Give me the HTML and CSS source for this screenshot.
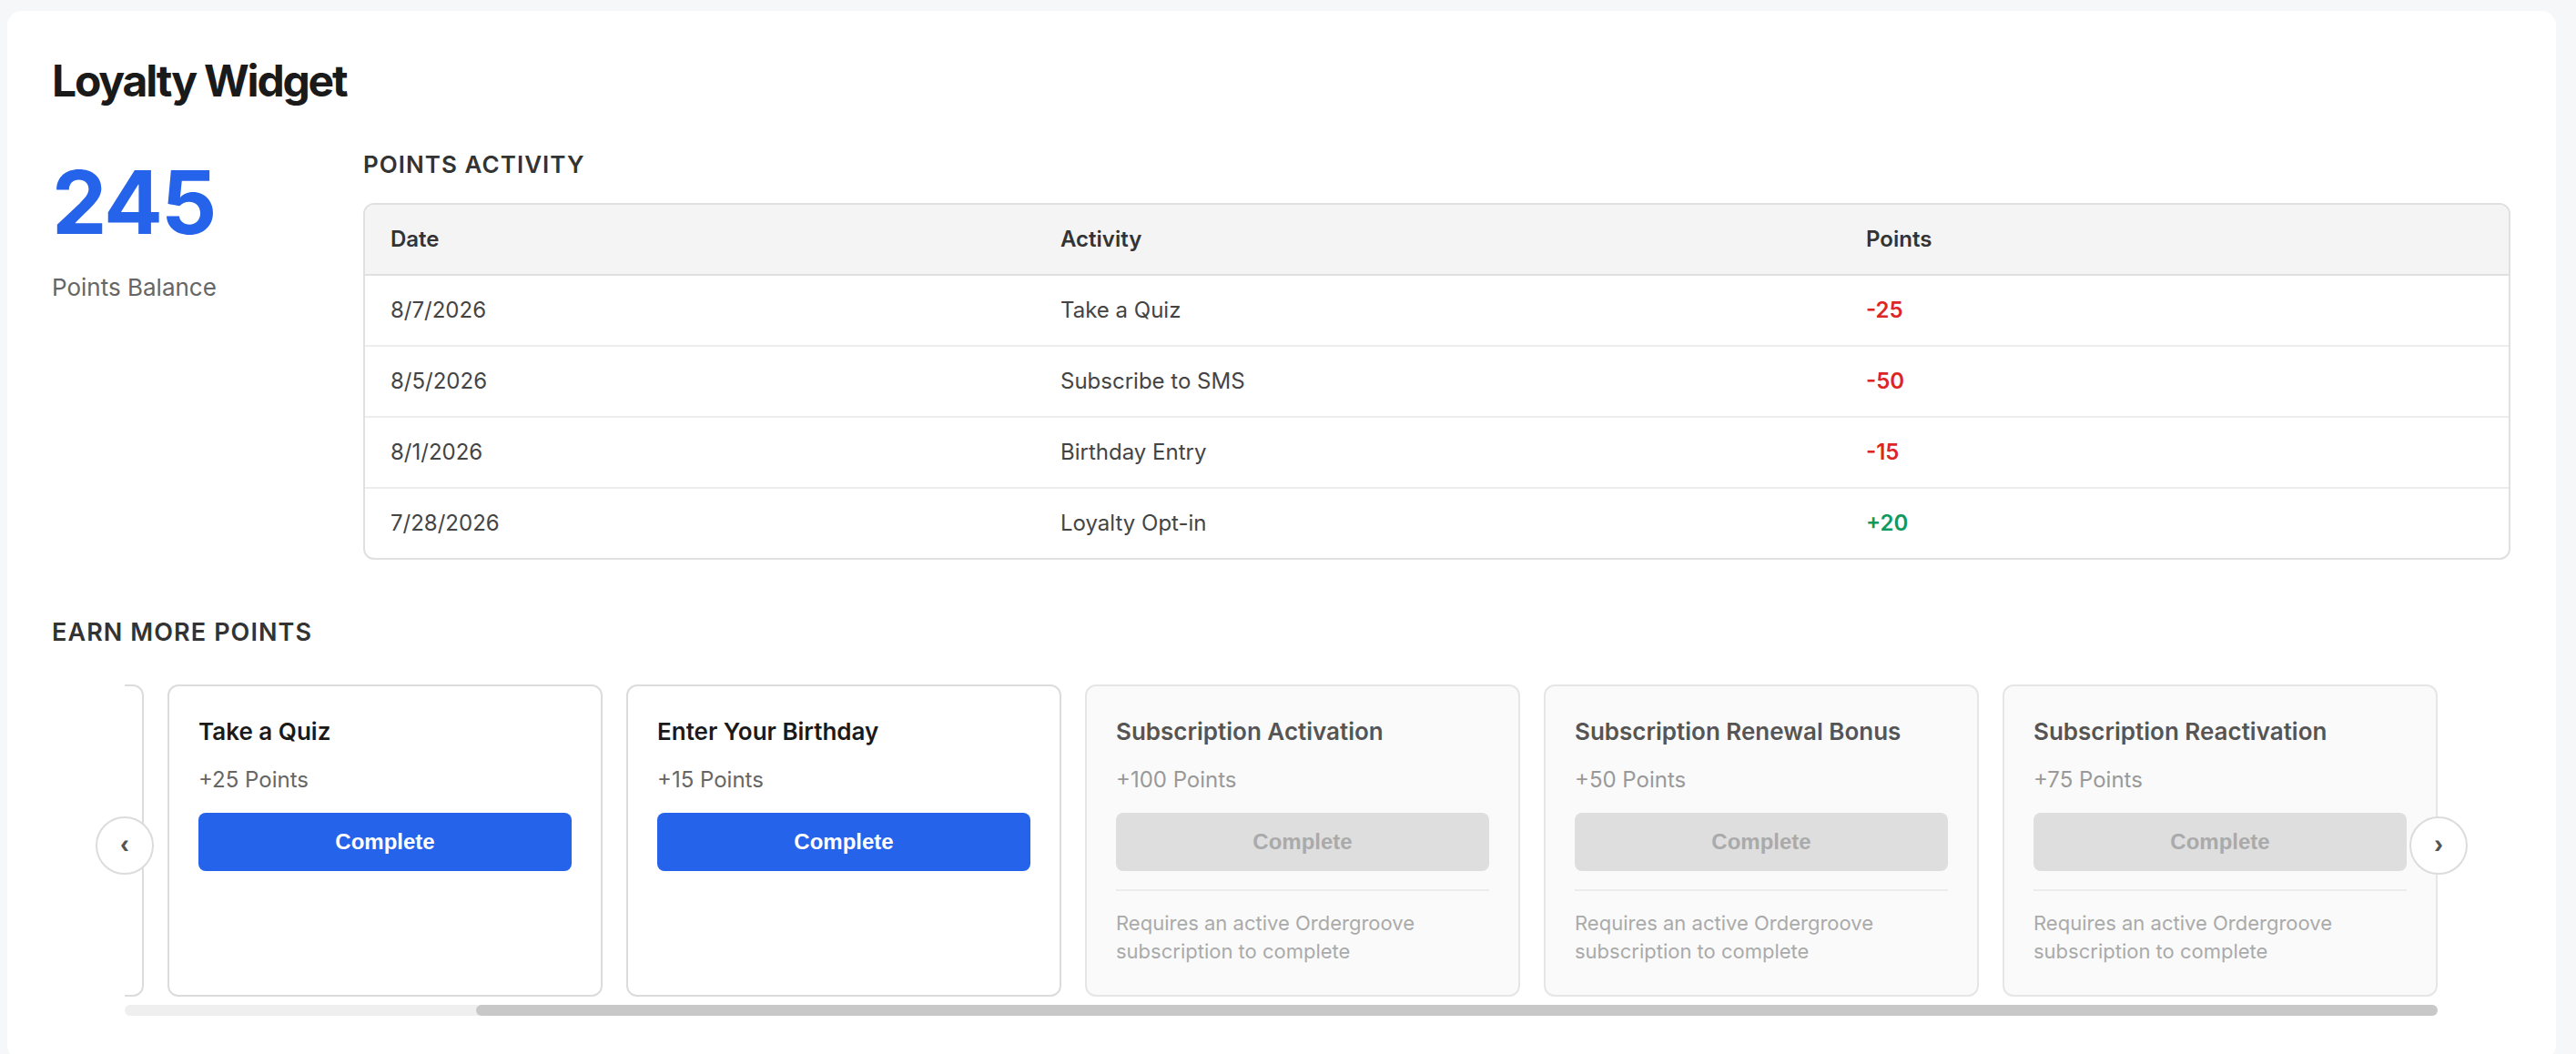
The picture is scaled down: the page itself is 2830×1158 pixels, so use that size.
FILE: index.html
```html
<!DOCTYPE html>
<html lang="en">
<head>
<meta charset="utf-8">
<title>Loyalty Widget</title>
<link rel="stylesheet" href="styles.css">
</head>
<body>
<main class="widget">
  <h1 class="widget-title">Loyalty Widget</h1>

  <section class="summary">
    <div class="balance">
      <div class="balance-value">245</div>
      <div class="balance-label">Points Balance</div>
    </div>

    <div class="activity">
      <h2 class="section-title">Points Activity</h2>
      <div class="table-wrap">
        <table class="activity-table">
          <colgroup>
            <col class="col-date">
            <col class="col-activity">
            <col class="col-points">
          </colgroup>
          <thead>
            <tr><th>Date</th><th>Activity</th><th>Points</th></tr>
          </thead>
          <tbody>
            <tr><td>8/7/2026</td><td>Take a Quiz</td><td class="pts neg">-25</td></tr>
            <tr><td>8/5/2026</td><td>Subscribe to SMS</td><td class="pts neg">-50</td></tr>
            <tr><td>8/1/2026</td><td>Birthday Entry</td><td class="pts neg">-15</td></tr>
            <tr><td>7/28/2026</td><td>Loyalty Opt-in</td><td class="pts pos">+20</td></tr>
          </tbody>
        </table>
      </div>
    </div>
  </section>

  <section class="earn">
    <h2 class="section-title earn-title">Earn More Points</h2>
    <div class="carousel">
      <div class="track">
        <article class="task task-peek" aria-hidden="true"></article>
        <article class="task">
          <h3 class="task-title">Take a Quiz</h3>
          <div class="task-points">+25 Points</div>
          <button class="task-btn" type="button">Complete</button>
        </article>
        <article class="task">
          <h3 class="task-title">Enter Your Birthday</h3>
          <div class="task-points">+15 Points</div>
          <button class="task-btn" type="button">Complete</button>
        </article>
        <article class="task task-locked">
          <h3 class="task-title">Subscription Activation</h3>
          <div class="task-points">+100 Points</div>
          <button class="task-btn" type="button" disabled>Complete</button>
          <p class="task-note">Requires an active Ordergroove subscription to complete</p>
        </article>
        <article class="task task-locked">
          <h3 class="task-title">Subscription Renewal Bonus</h3>
          <div class="task-points">+50 Points</div>
          <button class="task-btn" type="button" disabled>Complete</button>
          <p class="task-note">Requires an active Ordergroove subscription to complete</p>
        </article>
        <article class="task task-locked">
          <h3 class="task-title">Subscription Reactivation</h3>
          <div class="task-points">+75 Points</div>
          <button class="task-btn" type="button" disabled>Complete</button>
          <p class="task-note">Requires an active Ordergroove subscription to complete</p>
        </article>
      </div>
      <div class="scrollbar"><div class="scrollbar-thumb"></div></div>
      <button class="nav nav-prev" type="button" aria-label="Previous">&#8249;</button>
      <button class="nav nav-next" type="button" aria-label="Next">&#8250;</button>
    </div>
  </section>
</main>
</body>
</html>
```

FILE: styles.css
```css
* {
  box-sizing: border-box;
}

html,
body {
  margin: 0;
  background: #f6f7f9;
}

body {
  padding: 12px 0 0 8px;
  font-family: Inter, "Noto Sans", "Liberation Sans", sans-serif;
  color: #1a1a1a;
}

.widget {
  width: 2800px;
  background: #ffffff;
  border-radius: 16px;
  padding: 48px 50px 48px 49px;
}

.widget-title {
  margin: 0 0 47px;
  font-size: 48px;
  line-height: 58px;
  font-weight: 700;
  letter-spacing: -2.2px;
  color: #1a1a1a;
}

/* summary row */
.summary {
  display: grid;
  grid-template-columns: 294px 1fr;
  column-gap: 48px;
}

.balance-value {
  font-size: 96px;
  line-height: 115px;
  font-weight: 700;
  letter-spacing: -2px;
  color: #2563eb;
}

.balance-label {
  margin-top: 18px;
  font-size: 26px;
  line-height: 36px;
  color: #666666;
}

.section-title {
  margin: 0 0 26px;
  font-size: 26px;
  line-height: 32px;
  font-weight: 600;
  letter-spacing: 0.04em;
  text-transform: uppercase;
  color: #333333;
}

/* table */
.table-wrap {
  border: 2px solid #e0e0e0;
  border-radius: 12px;
  overflow: hidden;
}

.activity-table {
  width: 100%;
  border-collapse: collapse;
  table-layout: fixed;
}

.col-date {
  width: 736px;
}

.col-activity {
  width: 885px;
}

.activity-table th,
.activity-table td {
  padding: 22px 28px;
  font-size: 24px;
  line-height: 32px;
  text-align: left;
}

.activity-table th {
  background: #f4f4f4;
  font-weight: 600;
  color: #333333;
  border-bottom: 2px solid #e0e0e0;
}

.activity-table td {
  color: #444444;
  border-bottom: 2px solid #ededed;
}

.activity-table tbody tr:last-child td {
  border-bottom: 0;
}

.activity-table .pts {
  font-weight: 600;
}

.activity-table .neg {
  color: #dc2626;
}

.activity-table .pos {
  color: #0f9960;
}

/* earn section */
.earn {
  margin-top: 64px;
}

.earn-title {
  margin-bottom: 41px;
  font-size: 27px;
}

.carousel {
  position: relative;
  margin: 0 80px;
}

.track {
  display: flex;
  justify-content: flex-end;
  gap: 26px;
  overflow: hidden;
}

.task {
  flex: 0 0 478px;
  display: flex;
  flex-direction: column;
  padding: 32px;
  background: #ffffff;
  border: 2px solid #dcdcdc;
  border-radius: 12px;
}

.task-title {
  margin: 0 0 18px;
  font-size: 26px;
  line-height: 36px;
  font-weight: 600;
  color: #1a1a1a;
}

.task-points {
  margin-bottom: 19px;
  font-size: 24px;
  line-height: 34px;
  color: #666666;
}

.task-btn {
  width: 100%;
  height: 64px;
  padding: 0;
  border: 0;
  border-radius: 8px;
  background: #2563eb;
  color: #ffffff;
  font-family: "Liberation Sans", Arial, sans-serif;
  font-size: 24px;
  font-weight: 700;
}

.task-locked {
  background: #fafafa;
  border-color: #e6e6e6;
}

.task-locked .task-title {
  color: #555555;
}

.task-locked .task-points {
  color: #999999;
}

.task-locked .task-btn {
  background: #dedede;
  color: #aaaaaa;
}

.task-note {
  margin: 20px 0 0;
  padding-top: 20px;
  border-top: 2px solid #ececec;
  font-size: 22px;
  line-height: 30.8px;
  color: #aaaaaa;
}

/* fake scrollbar */
.scrollbar {
  display: flex;
  justify-content: flex-end;
  height: 12px;
  margin-top: 9px;
  border-radius: 6px;
  background: #efefef;
}

.scrollbar-thumb {
  width: 84.8%;
  border-radius: 6px;
  background: #c8c8c8;
}

/* arrows */
.nav {
  position: absolute;
  top: 145px;
  width: 64px;
  height: 64px;
  display: flex;
  align-items: center;
  justify-content: center;
  padding: 0 0 4px;
  border: 2px solid #dcdcdc;
  border-radius: 50%;
  background: #ffffff;
  color: #555555;
  font-family: "Liberation Sans", Arial, sans-serif;
  font-size: 30px;
  font-weight: 700;
  line-height: 1;
}

.nav-prev {
  left: -32px;
}

.nav-next {
  right: -33px;
}
```
